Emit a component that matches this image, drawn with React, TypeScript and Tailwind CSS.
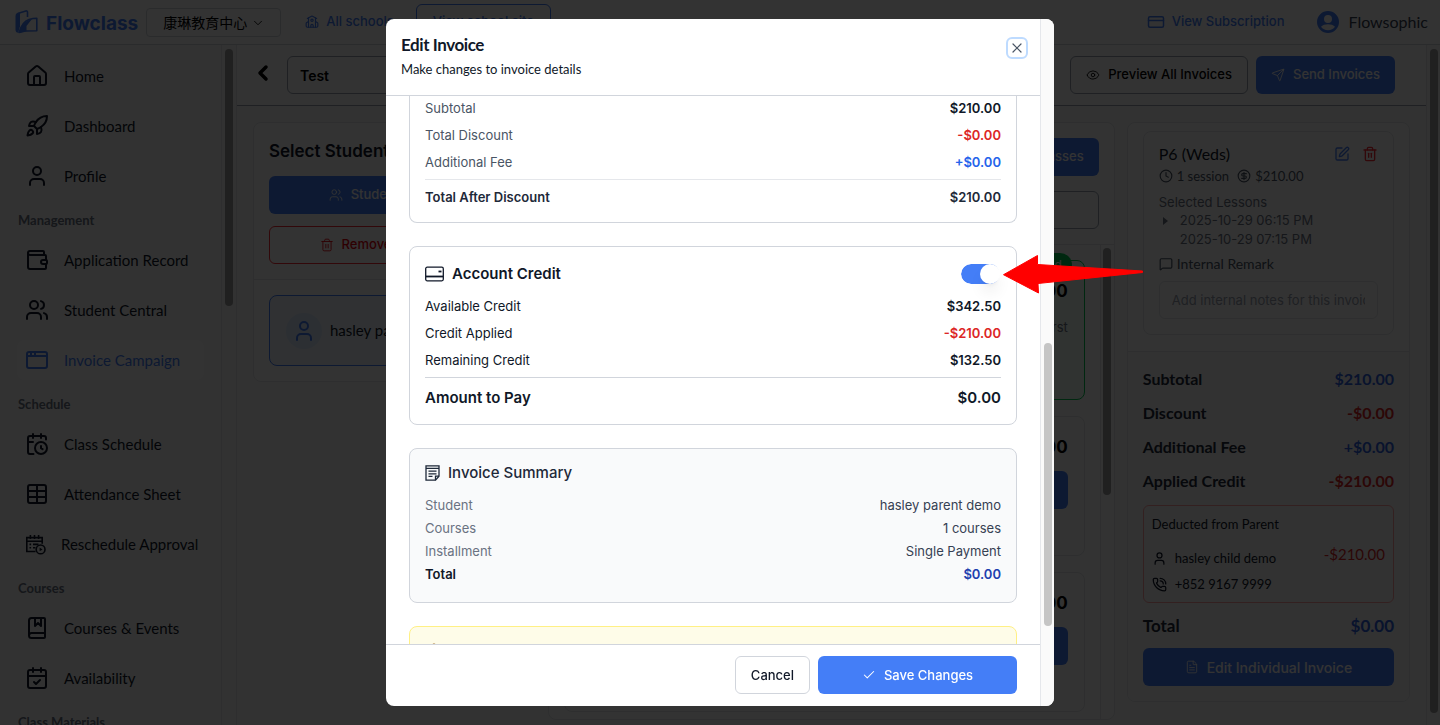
import { useState } from 'react';
import type { ReactNode } from 'react';
import {
	AppWindow,
	BookMarked,
	CalendarCheck,
	CalendarClock,
	Check,
	ChevronDown,
	ChevronLeft,
	CircleDollarSign,
	Clock,
	CreditCard,
	Eye,
	FileText,
	House,
	MessageSquare,
	PhoneCall,
	Rocket,
	School,
	Send,
	SquarePen,
	Table,
	Trash2,
	TriangleAlert,
	User,
	Users,
	Wallet,
	X,
} from 'lucide-react';

const RescheduleIcon = () => (
	<svg width="21" height="21" viewBox="0 0 21 21" fill="none" stroke="currentColor" strokeWidth="1.6" className="shrink-0">
		<path d="M10.5 17.5H1.8V3.6h15.4v6.2M1.8 7.2h15.4M5.4 1v4M9.5 1v4M13.6 1v4" />
		<path d="M4.5 10.4h1.6M8 10.4h5.5M4.5 13.8h1.6M8 13.8h2.4" />
		<circle cx="15.6" cy="15.4" r="4.4" />
		<path d="M14.6 13.6v3.6l2.9-1.8z" fill="currentColor" stroke="none" />
	</svg>
);

const menu = [
	{
		items: [
			{ label: 'Home', icon: <House /> },
			{ label: 'Dashboard', icon: <Rocket /> },
			{ label: 'Profile', icon: <User /> },
		],
	},
	{
		title: 'Management',
		items: [
			{ label: 'Application Record', icon: <Wallet /> },
			{ label: 'Student Central', icon: <Users /> },
			{ label: 'Invoice Campaign', icon: <AppWindow />, active: true },
		],
	},
	{
		title: 'Schedule',
		items: [
			{ label: 'Class Schedule', icon: <CalendarClock /> },
			{ label: 'Attendance Sheet', icon: <Table /> },
			{ label: 'Reschedule Approval', icon: <RescheduleIcon /> },
		],
	},
	{
		title: 'Courses',
		items: [
			{ label: 'Courses & Events', icon: <BookMarked /> },
			{ label: 'Availability', icon: <CalendarCheck /> },
		],
	},
	{ title: 'Class Materials', items: [] },
];

const totals = [
	{ label: 'Subtotal', value: '$210.00', color: 'text-[#2f62e0]' },
	{ label: 'Discount', value: '-$0.00', color: 'text-[#dc2626]' },
	{ label: 'Additional Fee', value: '+$0.00', color: 'text-[#2f62e0]' },
	{ label: 'Applied Credit', value: '-$210.00', color: 'text-[#dc2626]' },
];

const summary = [
	{ label: 'Student', value: 'hasley parent demo' },
	{ label: 'Courses', value: '1 courses' },
	{ label: 'Installment', value: 'Single Payment' },
];

function Logo() {
	return (
		<a href="#" className="flex items-center gap-[7px] text-[#447ef7]">
			<svg width="24" height="24" viewBox="0 0 24 24" fill="none" stroke="currentColor" strokeWidth="1.6" strokeLinejoin="round">
				<path d="M3.500 3.200L10.800 1c1-.3 1.700.2 1.700 1.200V7" />
				<path d="M.5 6C.5 4 2 2.800 3.800 2.600L5 2.800v13.500L3.200 22.800C1.500 22.600.5 21.500.5 20z" fill="currentColor" stroke="none" />
				<path d="M4 22.500C6 15.500 9 11 14 9.400c3-.9 5-1.200 7.800-1.200v12.600l-10.800.2c-3 .1-4.500 1.500-7 1.500z" />
				<path d="M4 22.500C6 15.500 10 10.500 17 9l-5.500 7v5.200c-3 0-5 1.300-7.500 1.300z" fill="currentColor" stroke="none" />
			</svg>
			<span className="pt-1 text-[19px] leading-6 font-bold">Flowclass</span>
		</a>
	);
}

function Header() {
	return (
		<header className="flex h-[45px] shrink-0 items-center border-b border-gray-300 bg-white pr-3 pl-[15px]">
			<Logo />
			<div className="relative ml-2">
				<select
					aria-label="School"
					className="h-[29px] w-[135px] appearance-none rounded-[4px] border border-gray-300 bg-white pl-4 text-[14px] text-black"
				>
					<option>康琳教育中心</option>
				</select>
				<ChevronDown className="pointer-events-none absolute top-2 right-4 size-3.5" strokeWidth={1.5} />
			</div>
			<a href="#" className="ml-6 flex items-center gap-[7px] text-[13px] font-medium text-[#447ef7]">
				<School className="size-3.5" />
				All schools
			</a>
			<button className="ml-[22px] h-9 w-[135px] rounded-md border border-[#447ef7] text-[13px] font-medium text-[#447ef7]">
				View school site
			</button>
			<a href="#" className="ml-auto flex items-center gap-[7px] text-[13px] font-medium text-[#447ef7]">
				<CreditCard className="size-[18px]" />
				View Subscription
			</a>
			<button className="ml-8 flex items-center gap-2 font-[Lato] text-[16px] text-gray-700">
				<svg width="24" height="24" viewBox="0 0 24 24" fill="#447ef7">
					<path d="M12 1a11 11 0 1 0 0 22 11 11 0 0 0 0-22Zm0 4a4 4 0 1 1 0 8 4 4 0 0 1 0-8Zm0 15.300c-3 0-5.500-1.300-7-3.500 1.300-1.900 4.500-2.600 7-2.600s5.700.7 7 2.600c-1.500 2.200-4 3.500-7 3.500Z" />
				</svg>
				Flowsophic
			</button>
		</header>
	);
}

function Sidebar() {
	return (
		<div className="flex w-[237px] shrink-0 border-r border-gray-200 bg-gray-50">
			<nav className="flex flex-1 flex-col gap-[10px] overflow-hidden pt-[11px] pr-[17px] pl-[17px] font-[Lato]">
				{menu.map((group, i) => (
					<div key={i} className="flex shrink-0 flex-col gap-[10px]">
						{group.title && (
							<p className="px-px pt-1 text-[13px] leading-5 font-bold text-gray-500">{group.title}</p>
						)}
						{group.items.map((item) => (
							<a
								key={item.label}
								href="#"
								className={
									item.active
										? 'flex h-10 items-center gap-[15px] rounded-lg bg-white px-2 text-[15px] whitespace-nowrap text-[#447ef7]'
										: 'flex h-10 items-center gap-[15px] rounded-lg px-2 text-[15px] whitespace-nowrap text-gray-900'
								}
							>
								{item.icon}
								{item.label}
							</a>
						))}
					</div>
				))}
			</nav>
			<div className="w-[15px] border-l border-gray-200 bg-neutral-50 pt-1 pl-[3px]">
				<div className="h-[257px] w-2 rounded-full bg-neutral-400" />
			</div>
		</div>
	);
}

function PrimaryButton({ children, large }: { children: ReactNode; large?: boolean }) {
	return (
		<button
			className={`flex h-[38px] w-full items-center justify-center gap-2 rounded-md bg-[#447ef7] px-[15px] font-medium text-white ${large ? 'text-[14px]' : 'text-[13px]'}`}
		>
			{children}
		</button>
	);
}

function Students() {
	return (
		<section className="rounded-lg border border-gray-200 bg-white">
			<div className="flex flex-col gap-3 border-b border-gray-200 p-[15px]">
				<h2 className="text-[17px] leading-[26px] font-semibold text-gray-900">Select Students</h2>
				<PrimaryButton>
					<Users className="size-3.5" strokeWidth={1.5} />
					Student Selection
				</PrimaryButton>
				<button className="flex h-[38px] items-center justify-center gap-2 rounded-md border border-red-500 text-[13px] font-medium text-red-600">
					<Trash2 className="size-3.5" strokeWidth={1.5} />
					Remove All Students
				</button>
			</div>
			<div className="p-[15px]">
				<div className="flex h-[71px] items-center gap-2 rounded-lg border border-[#447ef7] bg-blue-50 px-4 font-[Lato] text-[15px] text-gray-900">
					<div className="flex size-9 items-center justify-center rounded-full bg-blue-100 text-[#447ef7]">
						<User className="size-6" />
					</div>
					hasley parent demo
				</div>
			</div>
		</section>
	);
}

function Classes() {
	return (
		<section className="rounded-lg border border-gray-200 bg-white">
			<div className="flex flex-col gap-[15px] border-b border-gray-200 p-[15px]">
				<div className="ml-auto">
					<PrimaryButton>Select Classes</PrimaryButton>
				</div>
				<input aria-label="Search classes" className="h-[38px] rounded-md border border-gray-400 px-3 text-[13px]" />
			</div>
			<div className="flex">
				<div className="flex flex-1 flex-col gap-4 px-[15px] pt-[15px] pb-[7px]">
					{[true, false, false].map((selected, i) => (
						<div
							key={i}
							className={
								selected
									? 'relative flex h-[140px] flex-col items-end rounded-lg border border-green-500 bg-green-50 p-4'
									: 'relative flex h-[140px] flex-col items-end rounded-lg border border-gray-200 bg-white p-4'
							}
						>
							{selected && (
								<span className="absolute -top-2 right-3 rounded-full bg-green-500 px-2.5 py-1 text-[12px] leading-4 text-white">
									Selected
								</span>
							)}
							<p className="text-[17px] leading-7 font-bold text-black">$210.00</p>
							{selected ? (
								<p className="mt-[10px] text-[13px] leading-6 text-gray-500">Remove the other class first</p>
							) : (
								<div className="mt-[10px] w-36">
									<PrimaryButton>Add Class</PrimaryButton>
								</div>
							)}
						</div>
					))}
				</div>
				<div className="w-[14px] border-l border-gray-200 pt-[3px] pl-[2px]">
					<div className="h-[247px] w-2 rounded-full bg-neutral-400" />
				</div>
			</div>
		</section>
	);
}

function InvoicePanel() {
	return (
		<section className="overflow-hidden rounded-lg border border-gray-200 bg-white font-[Lato]">
			<div className="border-b border-gray-200 px-[15px] pt-2 pb-4">
				<div className="rounded-lg border border-gray-200 px-[15px] pt-[10px] pb-[15px] text-gray-600">
					<div className="flex items-center justify-between text-[16px] leading-6 text-gray-900">
						P6 (Weds)
						<div className="flex gap-3">
							<button aria-label="Edit class" className="text-[#447ef7]">
								<SquarePen className="size-4" />
							</button>
							<button aria-label="Delete class" className="text-red-500">
								<Trash2 className="size-4" />
							</button>
						</div>
					</div>
					<div className="flex items-center gap-1 text-[13px] leading-5">
						<Clock className="size-3.5" />
						1 session
						<CircleDollarSign className="ml-1 size-3.5" />
						$210.00
					</div>
					<p className="mt-[7px] font-[Inter] text-[13px] leading-[18px] text-gray-500">Selected Lessons</p>
					<div className="flex font-[Inter] text-[13px] leading-[19px] text-gray-500">
						<svg width="21" height="19" viewBox="0 0 21 19" className="shrink-0">
							<path d="M4 6l5 4-5 4z" fill="currentColor" />
						</svg>
						<p>
							2025-10-29 06:15 PM
							<br />
							2025-10-29 07:15 PM
						</p>
					</div>
					<label htmlFor="remark" className="mt-[3px] flex items-center gap-1 text-[14px] leading-6">
						<MessageSquare className="size-3.5" />
						Internal Remark
					</label>
					<input
						id="remark"
						placeholder="Add internal notes for this invoice"
						className="mt-[5px] h-[38px] w-full rounded-md border border-gray-200 px-3 font-[Inter] text-[13px] placeholder:text-gray-400"
					/>
				</div>
			</div>
			<div className="bg-gray-50 p-[15px]">
				<dl className="flex flex-col gap-[10px] text-[16px] leading-6 font-bold">
					{totals.map((t) => (
						<div key={t.label} className="flex justify-between">
							<dt className="text-gray-800">{t.label}</dt>
							<dd className={t.color}>{t.value}</dd>
						</div>
					))}
				</dl>
				<div className="mt-3 rounded-md border border-red-300 px-2 pt-2 pb-[5px] text-[13px] text-gray-900">
					<p className="leading-5">Deducted from Parent</p>
					<div className="mt-2 flex items-start justify-between">
						<div className="pt-[3px] leading-[26px]">
							<p className="flex items-center gap-2">
								<User className="size-[15px]" />
								hasley child demo
							</p>
							<p className="flex items-center gap-2">
								<PhoneCall className="size-[15px]" />
								+852 9167 9999
							</p>
						</div>
						<span className="text-[15px] leading-6 text-[#dc2626]">-$210.00</span>
					</div>
				</div>
				<div className="mt-[9px] mb-2 flex justify-between text-[17px] leading-7 font-bold">
					<span className="text-gray-800">Total</span>
					<span className="text-[#2f62e0]">$0.00</span>
				</div>
				<div className="font-[Inter]">
					<PrimaryButton large>
						<FileText className="size-3.5" strokeWidth={1.5} />
						Edit Individual Invoice
					</PrimaryButton>
				</div>
			</div>
		</section>
	);
}

function Campaign() {
	return (
		<main className="flex min-w-0 flex-1">
			<div className="min-w-0 flex-1 overflow-hidden">
				<div className="flex h-[61px] items-center border-b border-gray-400 bg-white pr-[31px] pl-[14px]">
					<button aria-label="Back">
						<ChevronLeft className="mb-1 size-6" strokeWidth={3.5} />
					</button>
					<input
						aria-label="Campaign name"
						defaultValue="Test"
						className="ml-3 h-[38px] w-80 rounded-md border border-gray-400 px-3 text-[14px] font-semibold text-black"
					/>
					<div className="ml-auto flex gap-2">
						<button className="flex h-[38px] items-center gap-2 rounded-md border border-gray-400 px-[15px] text-[13px] font-medium text-black">
							<Eye className="size-3.5" strokeWidth={1.5} />
							Preview All Invoices
						</button>
						<div>
							<PrimaryButton>
								<Send className="size-3.5" strokeWidth={1.5} />
								Send Invoices
							</PrimaryButton>
						</div>
					</div>
				</div>
				<div className="grid grid-cols-[1fr_2fr_1fr] items-start gap-3 p-4">
					<Students />
					<Classes />
					<InvoicePanel />
				</div>
			</div>
			<div className="w-[14px] shrink-0 border-l border-gray-200 bg-neutral-50 pt-1 pb-3 pl-[3px]">
				<div className="h-full w-2 rounded-full bg-neutral-400" />
			</div>
		</main>
	);
}

function Row({ label, value, color = 'text-gray-900' }: { label: string; value: string; color?: string }) {
	return (
		<div className="flex justify-between">
			<dt>{label}</dt>
			<dd className={`font-semibold ${color}`}>{value}</dd>
		</div>
	);
}

function EditInvoice() {
	const [credit, setCredit] = useState(true);

	return (
		<div
			role="dialog"
			aria-labelledby="edit-title"
			className="relative flex h-[calc(100vh-38px)] w-[668px] max-w-full rounded-lg bg-white text-[13px] leading-5"
		>
			<div className="flex min-w-0 flex-1 flex-col">
				<div className="flex h-[77px] shrink-0 items-start justify-between border-b border-gray-300 px-[15px] pt-4 font-[Lato] text-gray-900">
					<div>
						<h1 id="edit-title" className="text-[17px] leading-5 font-bold tracking-tight">
							Edit Invoice
						</h1>
						<p className="mt-1 text-[13px] leading-5">Make changes to invoice details</p>
					</div>
					<button
						aria-label="Close"
						className="mt-0.5 mr-[-3px] flex size-[22px] items-center justify-center rounded-md border-2 border-blue-200 text-gray-600"
					>
						<X className="size-4" strokeWidth={1.8} />
					</button>
				</div>

				<div className="flex min-h-0 flex-1 flex-col gap-[23px] overflow-hidden px-[23px]">
					<dl className="flex shrink-0 flex-col gap-[7px] rounded-b-lg border-x border-b border-gray-300 px-[15px] pt-[2px] pb-[15px] text-gray-600">
						<Row label="Subtotal" value="$210.00" />
						<Row label="Total Discount" value="-$0.00" color="text-[#dc2626]" />
						<Row label="Additional Fee" value="+$0.00" color="text-[#2563eb]" />
						<div className="border-t border-gray-200 pt-[7px] font-semibold text-gray-800">
							<Row label="Total After Discount" value="$210.00" color="text-gray-800" />
						</div>
					</dl>

					<div className="shrink-0 rounded-lg border border-gray-300 px-[15px] pt-[15px] pb-[14px] text-gray-900">
						<div className="flex h-6 items-center justify-between text-[15px]">
							<label htmlFor="credit" className="flex items-center gap-2 font-semibold">
								<svg width="19" height="16" viewBox="0 0 19 16" fill="none" stroke="currentColor" strokeWidth="1.3">
									<rect x=".7" y="1.200" width="17.600" height="13.600" rx="1.500" />
									<path d="M1 10.500h17" strokeWidth="1.800" />
									<path d="M13.500 5.500h3" strokeWidth="1.800" />
								</svg>
								Account Credit
							</label>
							<input
								id="credit"
								type="checkbox"
								role="switch"
								checked={credit}
								onChange={(e) => setCredit(e.target.checked)}
								className="h-5 w-10 appearance-none rounded-full border-r-2 border-transparent bg-gray-300 bg-clip-padding before:block before:size-5 before:rounded-full before:bg-white before:shadow-lg checked:bg-[#447ef7] checked:before:translate-x-[19px]"
							/>
						</div>
						<dl className="mt-[10px] flex flex-col gap-[7px]">
							<Row label="Available Credit" value="$342.50" />
							<Row label="Credit Applied" value="-$210.00" color="text-[#dc2626]" />
							<Row label="Remaining Credit" value="$132.50" />
							<div className="border-t border-gray-300 pt-2 text-[15px] leading-6 font-semibold">
								<Row label="Amount to Pay" value="$0.00" />
							</div>
						</dl>
					</div>

					<div className="shrink-0 rounded-lg border border-gray-300 bg-gray-50 px-[15px] pt-3 pb-[18px]">
						<h2 className="flex items-center gap-2 text-[15px] leading-6 font-medium text-gray-800">
							<svg width="15" height="16" viewBox="0 0 15 16" fill="none" stroke="currentColor" strokeWidth="1.300">
								<path d="M1 .8h13v10.400l-3.500 4H1zM1 3.300h13M3.500 6.200h8M3.500 8.800h8M3.500 11.400h4" />
								<path d="M14 11.200h-3.500v4" />
							</svg>
							Invoice Summary
						</h2>
						<dl className="mt-[10px] flex flex-col gap-[3px]">
							{summary.map((s) => (
								<div key={s.label} className="flex justify-between">
									<dt className="text-gray-500">{s.label}</dt>
									<dd className="text-gray-700">{s.value}</dd>
								</div>
							))}
							<div className="font-semibold text-gray-900">
								<Row label="Total" value="$0.00" color="text-[#1e40af]" />
							</div>
						</dl>
					</div>

					<div className="h-24 shrink-0 rounded-lg border border-yellow-200 bg-yellow-50 p-[15px]">
						<TriangleAlert className="size-[18px] text-yellow-800" />
					</div>
				</div>

				<div className="flex h-[62px] shrink-0 items-start justify-end gap-2 border-t border-gray-300 px-[23px] pt-[11px] text-[13px] font-medium">
					<button className="h-[38px] rounded-md border border-gray-300 px-[15px] text-gray-900">Cancel</button>
					<div className="w-[199px]">
						<PrimaryButton>
							<Check className="size-3.5" strokeWidth={1.8} />
							Save Changes
						</PrimaryButton>
					</div>
				</div>
			</div>

			<div className="w-[14px] rounded-r-lg border-l border-gray-200 bg-neutral-50 pt-[324px] pl-[3px]">
				<div className="h-[283px] w-2 rounded-full bg-neutral-400/60" />
			</div>

			<svg width="141" height="39" viewBox="0 0 141 39" className="absolute top-[236px] left-[617px]" fill="#f00" stroke="#f00" strokeLinejoin="round">
				<path d="M.5 19.700L34.500.500V9.500L139.500 16v1.500L35 28.500l.5 9.500z" />
			</svg>
		</div>
	);
}

export default function App() {
	return (
		<div className="flex h-screen flex-col overflow-hidden bg-gray-50 font-[Inter,'Noto_Sans_CJK_TC',sans-serif]">
			<Header />
			<div className="flex min-h-0 flex-1">
				<Sidebar />
				<Campaign />
			</div>
			<div className="fixed inset-0 flex items-center justify-center bg-black/80">
				<EditInvoice />
			</div>
		</div>
	);
}
